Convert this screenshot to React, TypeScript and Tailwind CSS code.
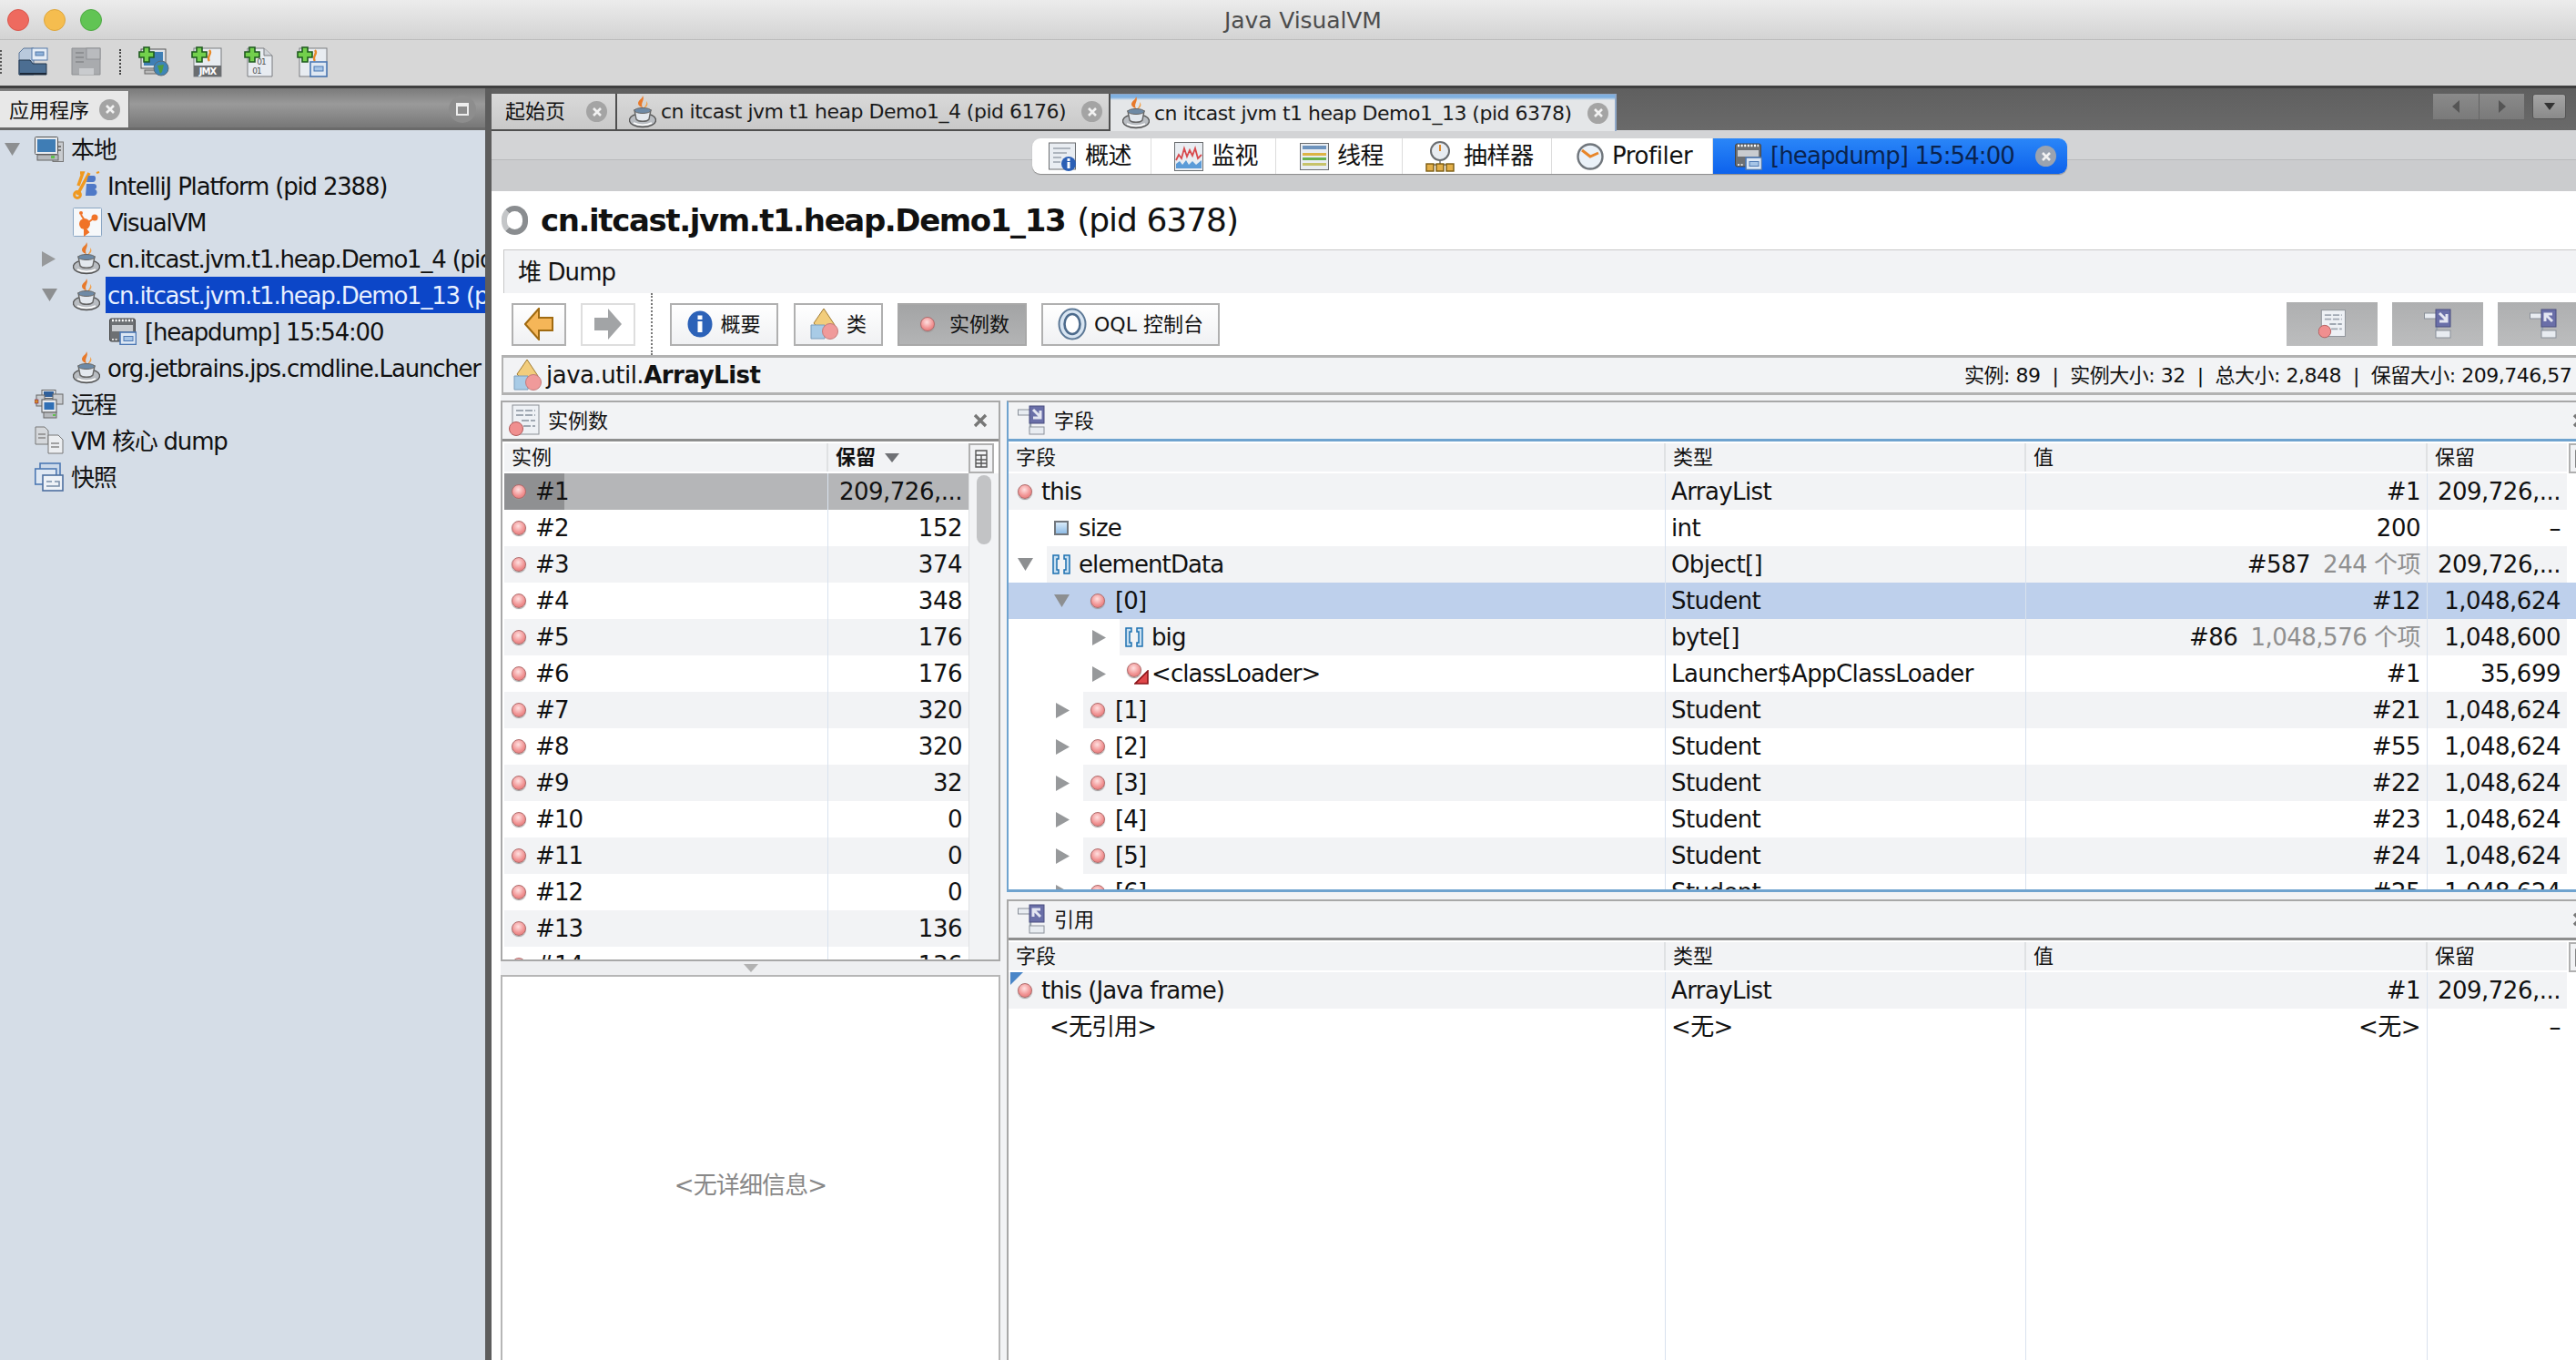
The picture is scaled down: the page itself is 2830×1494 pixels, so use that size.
import React from "react";

type IP = { className?: string };

const Ball = () => (
  <span className="block w-[16px] h-[16px] rounded-full shrink-0 border border-[#b06a6a] bg-[radial-gradient(circle_at_45%_35%,#ffe0e0,#f08f8f_60%,#d97070)] shadow-[0_1px_1px_#999]" />
);

const Arrow = ({ open }: { open?: boolean }) =>
  open ? (
    <svg width="17" height="14" viewBox="0 0 17 14" className="shrink-0"><path d="M0 0H17L8.5 14Z" fill="#8d8f91" /></svg>
  ) : (
    <svg width="15" height="17" viewBox="0 0 15 17" className="shrink-0"><path d="M0 0V17L15 8.5Z" fill="#97999b" /></svg>
  );

const CloseDot = ({ tone = "bg-[#a4a4a4]" }: { tone?: string }) => (
  <span className={`flex items-center justify-center w-[23px] h-[23px] rounded-full shrink-0 ${tone}`}>
    <svg width="12" height="12" viewBox="0 0 12 12"><path d="M2 2L10 10M10 2L2 10" stroke="#f2f2f2" strokeWidth="2.6" /></svg>
  </span>
);

const Cup = () => (
  <svg width="30" height="36" viewBox="0 0 30 36" className="shrink-0">
    <path d="M15 0C18 5 12 8 15 13C10 12 9 8 11 6C12 4 15 3 15 0Z" fill="#e8792a" />
    <path d="M19 6C20 10 17 12 16 14C20 13 22 9 19 6Z" fill="#f2a04a" />
    <ellipse cx="15" cy="27" rx="14.5" ry="7.5" fill="#b9bdc2" stroke="#555" strokeWidth="1.4" />
    <path d="M6 16H24L22 26C20 29 10 29 8 26Z" fill="#e3e8ee" stroke="#666" strokeWidth="1.4" />
    <ellipse cx="15" cy="16.5" rx="9" ry="3" fill="#6e8aa6" stroke="#666" />
    <path d="M5 30C10 33 20 33 25 30" stroke="#fff" strokeWidth="1.6" fill="none" />
  </svg>
);

const Monitor = () => (
  <svg width="32" height="28" viewBox="0 0 32 28" className="shrink-0">
    <rect x="20" y="6" width="11.5" height="21.5" fill="#c9ccd0" stroke="#777" />
    <rect x="23" y="10" width="6" height="2" fill="#777" />
    <rect x="23" y="14" width="6" height="2" fill="#777" />
    <rect x="0.5" y="0.5" width="25" height="19" rx="1" fill="#e8ebef" stroke="#555" />
    <rect x="3" y="3" width="20" height="14" fill="#3f7db5" />
    <rect x="3" y="20" width="23" height="6" fill="#b6b9bd" stroke="#666" />
    <rect x="18" y="21" width="4" height="3" fill="#5fc24e" />
  </svg>
);

const Ij = () => (
  <svg width="30" height="32" viewBox="0 0 30 32" className="shrink-0">
    <path d="M5 26L18 2M8 2H11L6 16" stroke="#f0991f" strokeWidth="3.5" fill="none" />
    <circle cx="5" cy="26" r="3.4" fill="none" stroke="#f0991f" strokeWidth="3" />
    <path d="M15 14H23C27 14 27 19 24 20C28 21 27 27 23 27H14Z M17 5H23C26 5 26 12 22 12H15Z" fill="#4f79c7" />
    <path d="M26 2L29 1" stroke="#f0991f" strokeWidth="2" />
  </svg>
);

const Vvm = () => (
  <svg width="32" height="32" viewBox="0 0 32 32" className="shrink-0">
    <rect x="0.5" y="0.5" width="31" height="31" rx="1" fill="#f6f8fa" stroke="#8aa6c4" />
    <circle cx="13" cy="18" r="6" fill="#f07328" />
    <circle cx="24" cy="11" r="3.5" fill="#f07328" />
    <circle cx="9" cy="6" r="2" fill="#f07328" />
    <path d="M13 22L13 30L17 27ZM9 8L13 14M24 11L16 17" stroke="#f07328" strokeWidth="2" fill="#f07328" />
  </svg>
);

const Dump = () => (
  <svg width="30" height="30" viewBox="0 0 30 30" className="shrink-0">
    <rect x="0.5" y="1" width="28" height="25" rx="2" fill="#6d7073" stroke="#444" />
    <path d="M3 3H26" stroke="#fff" strokeWidth="2.4" strokeDasharray="2 1.6" />
    <rect x="3" y="8" width="23" height="7" fill="#c9ccd0" />
    <rect x="12" y="16" width="17.5" height="13.5" fill="#dce7f4" stroke="#4d78b3" strokeWidth="1.6" />
    <rect x="16" y="20.5" width="10" height="5" fill="#a6c4e6" stroke="#4d78b3" />
    <path d="M3 24H10" stroke="#ddd" strokeWidth="2" strokeDasharray="2 1.6" />
  </svg>
);

const Remote = () => (
  <svg width="32" height="32" viewBox="0 0 32 32" className="shrink-0">
    <rect x="8" y="0.5" width="15" height="9" fill="#e8ebef" stroke="#666" />
    <rect x="10" y="2" width="11" height="6" fill="#2f5f9a" />
    <rect x="20" y="5" width="11" height="11" fill="#c9ccd0" stroke="#666" />
    <rect x="2" y="6" width="9" height="12" fill="#c9ccd0" stroke="#666" />
    <rect x="0" y="11" width="4" height="4" fill="#d18a2a" stroke="#704" strokeWidth="0.5" />
    <rect x="8" y="11" width="16" height="14" fill="#e8ebef" stroke="#555" />
    <rect x="10.5" y="14" width="11" height="8" fill="#2f6fb5" />
    <rect x="10" y="25" width="14" height="6" fill="#b6b9bd" stroke="#666" />
    <rect x="20" y="27" width="3" height="2" fill="#5fc24e" />
  </svg>
);

const CoreDump = () => (
  <svg width="32" height="32" viewBox="0 0 32 32" className="shrink-0">
    <path d="M1 1H11L15 5V20H1Z" fill="#d4d7db" stroke="#777" />
    <path d="M15 10H26L31 15V30H15Z" fill="#eceef1" stroke="#777" />
    <path d="M18 19H27M18 23H27M4 9H12M4 13H12" stroke="#888" strokeWidth="1.6" />
  </svg>
);

const Snapshot = () => (
  <svg width="32" height="32" viewBox="0 0 32 32" className="shrink-0">
    <rect x="6" y="1" width="22" height="16" fill="#cbd9ea" stroke="#4d78b3" strokeWidth="1.6" />
    <rect x="0.8" y="7" width="23" height="17" fill="#dfe8f3" stroke="#4d78b3" strokeWidth="1.6" />
    <rect x="9" y="14" width="22" height="17" fill="#eef2f7" stroke="#4d6f9f" strokeWidth="1.6" />
    <path d="M13 21H19M22 21H27V26H13" stroke="#7a8ea8" strokeWidth="1.6" fill="none" />
  </svg>
);

const Plus = () => (
  <path d="M6 1H12V6H17V12H12V17H6V12H1V6H6Z" fill="#73d04c" stroke="#1e5a1e" strokeWidth="1.6" />
);

const OpenIcon = () => (
  <svg width="33" height="32" viewBox="0 0 33 32" className="shrink-0">
    <path d="M1 6L6 1H17V30H1Z" fill="#b9c9dc" stroke="#5a7597" />
    <rect x="15" y="1" width="17" height="13" fill="#e6eef7" stroke="#5578a8" />
    <rect x="19" y="5" width="9" height="4" fill="#8fb3db" stroke="#5578a8" />
    <path d="M1 14H13L16 18H31V30H1Z" fill="#4c6e92" stroke="#23364d" />
    <path d="M2 29H31" stroke="#1b2838" strokeWidth="2" />
  </svg>
);

const SaveIcon = () => (
  <svg width="33" height="32" viewBox="0 0 33 32" className="shrink-0">
    <path d="M1 1H32V30H1Z" fill="#a9abae" stroke="#8e9093" />
    <rect x="17" y="1" width="15" height="12" fill="#b9bbbe" stroke="#909295" />
    <path d="M5 6H14M5 11H14M5 16H14" stroke="#8e9093" strokeWidth="2" />
    <rect x="9" y="23" width="16" height="7" fill="#c9cbce" />
  </svg>
);

const AddRemote = () => (
  <svg width="34" height="34" viewBox="0 0 34 34" className="shrink-0">
    <rect x="3" y="3" width="27" height="21" fill="#dfe3e8" stroke="#555" />
    <rect x="6" y="6" width="21" height="15" fill="#3f7fb5" />
    <rect x="7" y="26" width="16" height="4" fill="#bbb" stroke="#666" />
    <circle cx="25" cy="24" r="8" fill="#3d85b5" stroke="#5a6a75" />
    <path d="M21 21L28 20L26 28L24 30Z" fill="#4f9b3e" />
    <Plus />
  </svg>
);

const AddJmx = () => (
  <svg width="34" height="34" viewBox="0 0 34 34" className="shrink-0">
    <rect x="3" y="2" width="30" height="31" fill="#e8ecf1" stroke="#7a7d80" />
    <path d="M20 4C24 8 16 11 20 16" stroke="#e88a2a" strokeWidth="2.4" fill="none" />
    <rect x="3" y="21" width="30" height="12" fill="#6a6d70" />
    <text x="18" y="31" fontSize="10" fontWeight="700" textAnchor="middle" fill="#fff" fontFamily="DejaVu Sans">JMX</text>
    <Plus />
  </svg>
);

const AddCore = () => (
  <svg width="32" height="34" viewBox="0 0 32 34" className="shrink-0">
    <path d="M4 2H22L31 10V33H4Z" fill="#e8ecf1" stroke="#7a7d80" />
    <path d="M22 2V10H31" fill="#cfd3d8" stroke="#7a7d80" />
    <text x="19" y="20" fontSize="9" textAnchor="middle" fill="#555" fontFamily="DejaVu Sans">01</text>
    <text x="14" y="30" fontSize="9" textAnchor="middle" fill="#555" fontFamily="DejaVu Sans">01</text>
    <Plus />
  </svg>
);

const AddSnap = () => (
  <svg width="34" height="34" viewBox="0 0 34 34" className="shrink-0">
    <rect x="3" y="2" width="30" height="31" fill="#e8ecf1" stroke="#7a7d80" />
    <path d="M20 4C24 8 16 11 20 16" stroke="#e88a2a" strokeWidth="2.4" fill="none" />
    <rect x="15" y="17" width="18" height="16" fill="#dfe8f3" stroke="#4d78b3" strokeWidth="1.6" />
    <rect x="19" y="22" width="10" height="5" fill="#a6c4e6" stroke="#4d78b3" />
    <Plus />
  </svg>
);

const OverviewIcon = () => (
  <svg width="32" height="34" viewBox="0 0 32 34" className="shrink-0">
    <rect x="0.5" y="2" width="29" height="29" fill="#e9edf2" stroke="#6a6d70" />
    <path d="M5 8H24M5 13H20M5 18H14M5 23H13" stroke="#9aa2ad" strokeWidth="1.6" />
    <circle cx="22" cy="25" r="8" fill="#2b5fb5" />
    <rect x="20.5" y="23" width="3" height="7" fill="#fff" />
    <rect x="20.5" y="19" width="3" height="3" fill="#fff" />
  </svg>
);

const MonitorChart = () => (
  <svg width="32" height="32" viewBox="0 0 32 32" className="shrink-0">
    <rect x="0.5" y="0.5" width="31" height="31" fill="#e9edf2" stroke="#6a6d70" />
    <path d="M2 20L5 14L8 18L11 7L14 16L17 9L20 15L23 7L26 18L30 14" stroke="#d8494d" strokeWidth="1.8" fill="none" />
    <path d="M2 29V24L6 21L9 25L13 20L16 25L20 21L24 25L30 20V29Z" fill="#5b9bd8" />
  </svg>
);

const ThreadIcon = () => (
  <svg width="32" height="30" viewBox="0 0 32 30" className="shrink-0">
    <rect x="0.5" y="0.5" width="31" height="29" fill="#e9edf2" stroke="#6a6d70" />
    <rect x="3" y="3" width="26" height="4" fill="#6d93bd" />
    <rect x="3" y="11" width="26" height="3" fill="#dcb445" />
    <rect x="3" y="16" width="26" height="3" fill="#66b14e" />
    <rect x="3" y="22" width="26" height="3" fill="#c7c36a" />
  </svg>
);

const SamplerIcon = () => (
  <svg width="32" height="34" viewBox="0 0 32 34" className="shrink-0">
    <circle cx="16" cy="11" r="10" fill="#e8ecf1" stroke="#6a6d70" strokeWidth="2" />
    <path d="M16 4V11" stroke="#e08a2a" strokeWidth="2" />
    <path d="M16 22V26M6 26H26" stroke="#777" strokeWidth="1.6" fill="none" />
    <rect x="1" y="25" width="8" height="8" fill="#e4b04a" stroke="#7a5a10" strokeWidth="1.4" />
    <rect x="12" y="25" width="8" height="8" fill="#e4b04a" stroke="#7a5a10" strokeWidth="1.4" />
    <rect x="23" y="25" width="8" height="8" fill="#e4b04a" stroke="#7a5a10" strokeWidth="1.4" />
  </svg>
);

const ClockIcon = () => (
  <svg width="30" height="32" viewBox="0 0 30 32" className="shrink-0">
    <circle cx="15" cy="16" r="13.5" fill="#eaf1f8" stroke="#70767c" strokeWidth="2.4" />
    <path d="M6 9L15 16L24 12" stroke="#e8862a" strokeWidth="3" fill="none" />
  </svg>
);

const ClassIcon = () => (
  <svg width="32" height="36" viewBox="0 0 32 36" className="shrink-0">
    <path d="M15 1L27 19L15 30L4 17Z" fill="#f2cd7c" stroke="#a07a30" />
    <path d="M1 19H16V34H1Z" fill="#a8cbe6" stroke="#7a9dbb" />
    <circle cx="22" cy="26" r="8.5" fill="#f09a9a" stroke="#c47a7a" />
  </svg>
);

const InfoIcon = () => (
  <svg width="28" height="30" viewBox="0 0 28 30" className="shrink-0">
    <ellipse cx="14" cy="15" rx="13.5" ry="14.5" fill="#2c62b8" />
    <rect x="11.5" y="12" width="5" height="12" fill="#fff" />
    <rect x="11.5" y="5.5" width="5" height="4.5" fill="#fff" />
  </svg>
);

const OqlIcon = () => (
  <svg width="32" height="36" viewBox="0 0 32 36" className="shrink-0">
    <ellipse cx="16" cy="18" rx="14.5" ry="16.5" fill="#d8e5f2" stroke="#5c7896" strokeWidth="2" />
    <ellipse cx="16" cy="18" rx="8.5" ry="11" fill="#fff" stroke="#4d6b8c" strokeWidth="2.6" />
  </svg>
);

const InstTable = () => (
  <svg width="34" height="36" viewBox="0 0 34 36" className="shrink-0">
    <rect x="4" y="1" width="29" height="32" fill="#eef1f5" stroke="#8a8f95" />
    <path d="M8 7H29M8 12H29M14 18H29M16 24H29" stroke="#a0a8b2" strokeWidth="2" strokeDasharray="8 2" />
    <circle cx="8" cy="27" r="7.5" fill="#f08f8f" stroke="#b05a5a" />
  </svg>
);

const FieldTreeIcon = ({ out }: { out?: boolean }) => (
  <svg width="30" height="34" viewBox="0 0 30 34" className="shrink-0">
    <path d="M6 9H14V28H18" stroke="#9aa5b0" strokeWidth="2.4" fill="none" />
    <rect x="0.5" y="5" width="14" height="6" fill="#e8ecf1" stroke="#8a9099" />
    <rect x="13" y="24" width="16" height="8" fill="#e8ecf1" stroke="#8a9099" />
    <rect x="13" y="1" width="16" height="19" fill="#6a6fa8" stroke="#4a4f80" />
    <path d={out ? "M17 5L25 13M25 6V14H17" : "M25 14L17 6M17 14V6H25"} stroke="#e4e6f2" strokeWidth="3" fill="none" />
  </svg>
);

const SizeIcon = () => (
  <span className="block w-[16px] h-[16px] border-2 border-[#71767c] bg-[linear-gradient(#d9ebfa,#8fbce6)] shrink-0" />
);

const ArrIcon = () => (
  <svg width="22" height="24" viewBox="0 0 22 24" className="shrink-0">
    <path d="M8 2H2V22H8V18H6V6H8ZM14 2H20V22H14V18H16V6H14Z" fill="#c9e0f2" stroke="#1c70b0" strokeWidth="1.5" />
  </svg>
);

const LoaderIcon = () => (
  <span className="relative block w-[24px] h-[24px] shrink-0">
    <span className="absolute left-0 top-0"><Ball /></span>
    <svg width="16" height="16" viewBox="0 0 16 16" className="absolute right-0 bottom-0">
      <path d="M15 1V15H1Z" fill="#e0474a" stroke="#8a1418" strokeWidth="1.6" />
    </svg>
  </span>
);

const Tri = ({ className }: IP) => (
  <svg width="16" height="12" viewBox="0 0 16 12" className={className}><path d="M0 1H16L8 11Z" fill="#6f7175" /></svg>
);

const treeRows: { lvl: number; arrow?: "o" | "c"; icon: React.ReactNode; text: string; sel?: boolean }[] = [
  { lvl: 0, arrow: "o", icon: <Monitor />, text: "本地" },
  { lvl: 1, icon: <Ij />, text: "IntelliJ Platform (pid 2388)" },
  { lvl: 1, icon: <Vvm />, text: "VisualVM" },
  { lvl: 1, arrow: "c", icon: <Cup />, text: "cn.itcast.jvm.t1.heap.Demo1_4 (pid 6176)" },
  { lvl: 1, arrow: "o", icon: <Cup />, text: "cn.itcast.jvm.t1.heap.Demo1_13 (pid 6378)", sel: true },
  { lvl: 2, icon: <Dump />, text: "[heapdump] 15:54:00" },
  { lvl: 1, icon: <Cup />, text: "org.jetbrains.jps.cmdline.Launcher (" },
  { lvl: 0, icon: <Remote />, text: "远程" },
  { lvl: 0, icon: <CoreDump />, text: "VM 核心 dump" },
  { lvl: 0, icon: <Snapshot />, text: "快照" },
];

const lvlWidth = ["w-[78px]", "w-[118px]", "w-[159px]"];
const lvlArrow = ["pl-[5px]", "pl-[46px]", "pl-[46px]"];
const lvlIcon = ["left-[38px]", "left-[80px]", "left-[120px]"];

const Tree = () => (
  <div className="flex-1 bg-[#d5dde7] pt-[1px] overflow-hidden tracking-[-1.2px]">
    {treeRows.map((r, i) => (
      <div key={i} className="relative flex items-center h-[40px] whitespace-nowrap">
        <div className={`${lvlWidth[r.lvl]} ${lvlArrow[r.lvl]} shrink-0 flex items-center`}>
          {r.arrow && <Arrow open={r.arrow === "o"} />}
        </div>
        <div className={`absolute ${lvlIcon[r.lvl]} top-0 h-[40px] flex items-center`}>{r.icon}</div>
        <div className={`flex-1 h-[40px] leading-[43px] overflow-hidden -ml-[2px] pl-[2px] ${r.sel ? "bg-[#0c46c8] text-[#e8f0ff]" : "text-[#111]"}`}>{r.text}</div>
      </div>
    ))}
  </div>
);

const Tab = ({ w, icon, text, active }: { w: string; icon?: React.ReactNode; text: string; active?: boolean }) => (
  <div className={`${w} h-[41px] shrink-0 flex items-center gap-[5px] pl-[13px] whitespace-nowrap text-[22px] border-r-2 border-[#4f4f4f] ${active ? "bg-[linear-gradient(#7fb0e0_0,#7fb0e0_3px,#e4e6e8_6px)] border-t border-[#8fa8c8]" : "bg-[linear-gradient(#d9d9d9,#c9c9c9)] border-b-2"}`}>
    {icon}
    <span className="text-[#1a1a1a] tracking-[-0.5px]">{text}</span>
    <span className="ml-auto mr-[7px]"><CloseDot /></span>
  </div>
);

const SubTab = ({ w, pl, gap, icon, text }: { w: string; pl: string; gap: string; icon: React.ReactNode; text: string }) => (
  <div className={`${w} ${pl} ${gap} shrink-0 h-full flex items-center border-r border-[#dcdcdc] text-[#111] whitespace-nowrap tracking-[-0.4px]`}>
    {icon}
    <span>{text}</span>
  </div>
);

const Btn = ({ w, children, sel, mute }: { w: string; children: React.ReactNode; sel?: boolean; mute?: boolean }) => (
  <div className={`${w} h-[47px] shrink-0 flex items-center justify-center gap-[8px] text-[22px] tracking-normal border-2 text-[#111] whitespace-nowrap ${sel ? "bg-[linear-gradient(#a3a4a5,#b3b4b5)] border-[#a8a8a8] pl-[6px]" : mute ? "bg-white border-[#dedede]" : "bg-[linear-gradient(#fff,#f0f1f3)] border-[#b0b0b0]"}`}>
    {children}
  </div>
);

const GrayBtn = ({ children }: { children: React.ReactNode }) => (
  <div className="w-[100px] h-[48px] shrink-0 flex items-center justify-center bg-[linear-gradient(#aeafb0,#bcbdbe)]">{children}</div>
);

const instRows = [
  ["#1", "209,726,..."], ["#2", "152"], ["#3", "374"], ["#4", "348"], ["#5", "176"], ["#6", "176"], ["#7", "320"],
  ["#8", "320"], ["#9", "32"], ["#10", "0"], ["#11", "0"], ["#12", "0"], ["#13", "136"], ["#14", "136"],
];

const HeadCell = ({ w, children, last }: { w: string; children: React.ReactNode; last?: boolean }) => (
  <div className={`${w} h-[31px] shrink-0 flex items-center gap-[10px] pl-[8px] text-[22px] tracking-normal text-[#111] ${last ? "" : "border-r-2 border-[#dfe1e3]"}`}>{children}</div>
);

const Corner = () => (
  <div className="w-[28px] h-[33px] shrink-0 border-2 border-[#b0b0b0] bg-[#f2f3f5] flex items-center justify-center">
    <svg width="14" height="20" viewBox="0 0 14 20"><path d="M1 1H13V19H1ZM1 6H13M1 11H13M1 15H13M7 6V19" stroke="#555" strokeWidth="1.4" fill="none" /></svg>
  </div>
);

const PanelHead = ({ icon, title, close, blue, pad }: { icon: React.ReactNode; title: string; close: string; blue?: boolean; pad: string }) => (
  <div className={`h-[43px] shrink-0 flex items-center bg-[#f2f3f5] border-b-[3px] whitespace-nowrap ${blue ? "border-[#6fa3cf]" : "border-[#8e8e8e]"}`}>
    <div className={`w-[50px] ${pad} flex items-center shrink-0`}>{icon}</div>
    <span className="text-[22px] tracking-normal text-[#111]">{title}</span>
    <svg width="16" height="16" viewBox="0 0 16 16" className={`${close} shrink-0`}><path d="M2 2L14 14M14 2L2 14" stroke="#777" strokeWidth="3.4" /></svg>
  </div>
);

type F = {
  d: number;
  arrow?: "o" | "c";
  icon?: React.ReactNode;
  name: string;
  type: string;
  val: string;
  muted?: string;
  ret: string;
  sel?: boolean;
  gray?: boolean;
};

const fields: F[] = [
  { d: 0, icon: <Ball />, name: "this", type: "ArrayList", val: "#1", ret: "209,726,...", gray: true },
  { d: 1, icon: <span className="pl-[3px]"><SizeIcon /></span>, name: "size", type: "int", val: "200", ret: "–" },
  { d: 1, arrow: "o", icon: <ArrIcon />, name: "elementData", type: "Object[]", val: "#587", muted: "244 个项", ret: "209,726,...", gray: true },
  { d: 2, arrow: "o", icon: <span className="pl-[3px]"><Ball /></span>, name: "[0]", type: "Student", val: "#12", ret: "1,048,624", sel: true },
  { d: 3, arrow: "c", icon: <ArrIcon />, name: "big", type: "byte[]", val: "#86", muted: "1,048,576 个项", ret: "1,048,600", gray: true },
  { d: 3, arrow: "c", icon: <span className="pl-[3px]"><LoaderIcon /></span>, name: "<classLoader>", type: "Launcher$AppClassLoader", val: "#1", ret: "35,699" },
  { d: 2, arrow: "c", icon: <span className="pl-[3px]"><Ball /></span>, name: "[1]", type: "Student", val: "#21", ret: "1,048,624", gray: true },
  { d: 2, arrow: "c", icon: <span className="pl-[3px]"><Ball /></span>, name: "[2]", type: "Student", val: "#55", ret: "1,048,624" },
  { d: 2, arrow: "c", icon: <span className="pl-[3px]"><Ball /></span>, name: "[3]", type: "Student", val: "#22", ret: "1,048,624", gray: true },
  { d: 2, arrow: "c", icon: <span className="pl-[3px]"><Ball /></span>, name: "[4]", type: "Student", val: "#23", ret: "1,048,624" },
  { d: 2, arrow: "c", icon: <span className="pl-[3px]"><Ball /></span>, name: "[5]", type: "Student", val: "#24", ret: "1,048,624", gray: true },
  { d: 2, arrow: "c", icon: <span className="pl-[3px]"><Ball /></span>, name: "[6]", type: "Student", val: "#25", ret: "1,048,624" },
];

const gutter = ["w-0", "w-[42px] pr-[15px]", "w-[82px] pr-[15px]", "w-[122px] pr-[15px]"];
const iconBox = ["w-[36px] pl-[10px]", "w-[35px] pl-[5px]", "w-[35px] pl-[5px]", "w-[35px] pl-[5px]"];

const FieldRow = ({ f }: { f: F }) => {
  const bg = f.sel ? "bg-[#bed0ec]" : f.gray ? "bg-[#f2f3f5]" : "bg-white";
  return (
    <div className={`flex h-[40px] shrink-0 whitespace-nowrap text-[#111] ${f.sel ? "bg-[#bed0ec]" : ""}`}>
      <div className="w-[722px] shrink-0 flex border-r border-[#d9e2ee]">
        <div className={`${gutter[f.d]} shrink-0 flex items-center justify-end`}>
          {f.arrow && <Arrow open={f.arrow === "o"} />}
        </div>
        <div className={`flex-1 flex items-center ${bg}`}>
          <div className={`${iconBox[f.d]} shrink-0 flex items-center`}>{f.icon}</div>
          <span className={f.icon ? "" : "ml-[9px]"}>{f.name}</span>
        </div>
      </div>
      <div className={`w-[396px] shrink-0 pl-[6px] leading-[40px] tracking-[-0.6px] border-r border-[#d9e2ee] ${bg}`}>{f.type}</div>
      <div className={`w-[441px] shrink-0 pr-[7px] flex items-center justify-end gap-[14px] tracking-[-0.5px] border-r border-[#d9e2ee] ${bg}`}>
        <span>{f.val}</span>
        {f.muted && <span className="text-[#8f8f8f]">{f.muted}</span>}
      </div>
      <div className={`w-[153px] shrink-0 pr-[7px] text-right leading-[40px] tracking-[-0.5px] ${bg}`}>{f.ret}</div>
    </div>
  );
};

const FieldHead = () => (
  <div className="flex h-[35px] pt-[2px] shrink-0 bg-white">
    <div className="flex bg-[#f2f3f5] h-[31px]">
      <HeadCell w="w-[722px]">字段</HeadCell>
      <HeadCell w="w-[396px]">类型</HeadCell>
      <HeadCell w="w-[441px]">值</HeadCell>
      <HeadCell w="w-[153px]" last>保留</HeadCell>
    </div>
    <div className="ml-[2px]"><Corner /></div>
  </div>
);

const Filler = () => (
  <div className="flex flex-1">
    <div className="w-[722px] shrink-0 border-r border-[#d9e2ee]" />
    <div className="w-[396px] shrink-0 border-r border-[#d9e2ee]" />
    <div className="w-[441px] shrink-0 border-r border-[#d9e2ee]" />
  </div>
);

export default function App() {
  return (
    <div className="w-[2830px] h-[1494px] overflow-hidden flex flex-col bg-white text-[26px] font-['DejaVu_Sans','Noto_Sans_CJK_SC',sans-serif] tracking-[-0.9px]">
      {/* title bar */}
      <div className="h-[44px] shrink-0 flex items-center pl-[8px] gap-[16px] bg-[linear-gradient(#ececec,#d3d3d3)] border-b border-[#bcbcbc]">
        <span className="w-[24px] h-[24px] rounded-full bg-[#ee6a5f] border border-[#d9584e]" />
        <span className="w-[24px] h-[24px] rounded-full bg-[#f5bd4f] border border-[#dda63c]" />
        <span className="w-[24px] h-[24px] rounded-full bg-[#61c454] border border-[#4fa944]" />
        <span className="ml-[1217px] mt-[2px] text-[#4d4d4d] text-[25px] tracking-[-0.1px]">Java VisualVM</span>
      </div>
      {/* toolbar */}
      <div className="h-[50px] shrink-0 flex items-center pb-[2px] bg-[#d7d7d7]">
        <span className="h-[26px] border-l-[2px] border-dotted border-[#555]" />
        <span className="ml-[18px]"><OpenIcon /></span>
        <span className="ml-[25px]"><SaveIcon /></span>
        <span className="ml-[20px] h-[28px] border-l-[2px] border-dotted border-[#444]" />
        <span className="ml-[19px]"><AddRemote /></span>
        <span className="ml-[24px]"><AddJmx /></span>
        <span className="ml-[24px]"><AddCore /></span>
        <span className="ml-[26px]"><AddSnap /></span>
      </div>
      <div className="h-[3px] shrink-0 bg-[#3f3f3f]" />
      {/* main */}
      <div className="flex-1 flex min-h-0">
        {/* left */}
        <div className="w-[533px] shrink-0 flex flex-col">
          <div className="h-[46px] shrink-0 flex items-end bg-[linear-gradient(#7a7a7a,#9a9a9a_40%,#777)] border-b-[3px] border-[#6a6a6a] relative">
            <div className="w-[142px] h-[40px] flex items-center pl-[10px] bg-[#e8e8e8] border-r border-[#666] text-[22px] text-[#111] whitespace-nowrap gap-[11px] tracking-normal">
              <span className="mt-[2px]">应用程序</span>
              <CloseDot />
            </div>
            <div className="absolute right-[10px] top-[8px] w-[30px] h-[30px] rounded-full bg-[#8d8d8d] flex items-center justify-center">
              <span className="block w-[14px] h-[14px] border-2 border-t-[4px] border-[#eee]" />
            </div>
          </div>
          <Tree />
        </div>
        <div className="w-[7px] shrink-0 bg-[#5d5d5d]" />
        {/* right */}
        <div className="flex-1 min-w-0 flex flex-col overflow-hidden">
          {/* doc tabs */}
          <div className="h-[46px] shrink-0 pt-[6px] bg-[linear-gradient(#5f5f5f,#6a6a6a)] flex items-start relative">
            <div className="w-[138px] h-[41px] shrink-0 flex items-center pl-[15px] text-[22px] text-[#111] bg-[linear-gradient(#d9d9d9,#c9c9c9)] border-r-2 border-b-2 border-[#4f4f4f] tracking-normal">
              <span>起始页</span>
              <span className="ml-auto mr-[9px]"><CloseDot /></span>
            </div>
            <Tab w="w-[542px]" icon={<Cup />} text="cn itcast jvm t1 heap Demo1_4 (pid 6176)" />
            <Tab w="w-[556px]" icon={<Cup />} text="cn itcast jvm t1 heap Demo1_13 (pid 6378)" active />
            <div className="absolute left-[2133px] top-[6px] flex h-[28px] gap-[1px]">
              <div className="w-[50px] bg-[linear-gradient(#8a8a8a,#7a7a7a)] flex items-center justify-center"><svg width="8" height="14" viewBox="0 0 8 14"><path d="M8 0V14L0 7Z" fill="#555" /></svg></div>
              <div className="w-[49px] bg-[linear-gradient(#8a8a8a,#7a7a7a)] flex items-center justify-center"><svg width="8" height="14" viewBox="0 0 8 14"><path d="M0 0V14L8 7Z" fill="#555" /></svg></div>
              <div className="ml-[8px] w-[37px] rounded-[3px] bg-[linear-gradient(#a5a5a5,#8a8a8a)] border border-[#555] flex items-center justify-center"><svg width="12" height="8" viewBox="0 0 12 8"><path d="M0 0H12L6 8Z" fill="#333" /></svg></div>
            </div>
          </div>
          {/* sub tabs */}
          <div className="h-[67px] shrink-0 pt-[9px] pl-[594px] flex items-start bg-[linear-gradient(#d3d4d6_0,#d3d4d6_32px,#b9babc_32px,#b9babc_33px,#cbccce_33px)]">
            <div className="h-[39px] flex rounded-[9px] overflow-hidden shadow-[0_1px_1px_#8a8a8a] bg-white">
              <SubTab w="w-[131px]" pl="pl-[18px]" gap="gap-[8px]" icon={<OverviewIcon />} text="概述" />
              <SubTab w="w-[137px]" pl="pl-[25px]" gap="gap-[9px]" icon={<MonitorChart />} text="监视" />
              <SubTab w="w-[139px]" pl="pl-[26px]" gap="gap-[9px]" icon={<ThreadIcon />} text="线程" />
              <SubTab w="w-[164px]" pl="pl-[25px]" gap="gap-[10px]" icon={<SamplerIcon />} text="抽样器" />
              <SubTab w="w-[177px]" pl="pl-[27px]" gap="gap-[9px]" icon={<ClockIcon />} text="Profiler" />
              <div className="w-[389px] h-full flex items-center pl-[24px] gap-[9px] bg-[linear-gradient(#2a86f8,#0d62ec)] text-[#0a2450] whitespace-nowrap">
                <Dump />
                <span>[heapdump] 15:54:00</span>
                <span className="ml-auto mr-[12px]"><CloseDot tone="bg-[#9aa3b0]" /></span>
              </div>
            </div>
          </div>
          {/* title */}
          <div className="h-[64px] shrink-0 flex items-center pl-[11px] gap-[14px] whitespace-nowrap text-[34px] tracking-[-1.4px] text-[#111]">
            <span className="block w-[29px] h-[32px] rounded-full border-[6px] border-[#8a8d90] border-l-[#c4c6c8]" />
            <span className="font-bold">cn.itcast.jvm.t1.heap.Demo1_13</span>
            <span className="-ml-[1px] text-[36px] tracking-[-1px]">(pid 6378)</span>
          </div>
          {/* content */}
          <div className="flex-1 min-h-0 flex flex-col pl-[10px] bg-white">
            <div className="h-[48px] shrink-0 ml-[3px] flex items-center pl-[15px] pt-[2px] bg-[#f2f3f5] border-t border-l border-[#c8c8c8] text-[#111] whitespace-nowrap">堆 Dump</div>
            <div className="h-[68px] shrink-0 flex items-center pl-[12px]">
              <Btn w="w-[60px]">
                <svg width="32" height="36" viewBox="0 0 32 36"><path d="M16 1L1 18L16 35V25H31V11H16Z" fill="#f5b658" stroke="#a06a10" strokeWidth="2" /></svg>
              </Btn>
              <span className="ml-[16px]"><Btn w="w-[60px]" mute>
                <svg width="32" height="36" viewBox="0 0 32 36"><path d="M16 1L31 18L16 35V25H1V11H16Z" fill="#a2a4a6" /></svg>
              </Btn></span>
              <span className="ml-[17px] h-[68px] border-l-2 border-dotted border-[#777]" />
              <span className="ml-[19px]"><Btn w="w-[119px]"><InfoIcon /><span>概要</span></Btn></span>
              <span className="ml-[17px]"><Btn w="w-[98px]"><ClassIcon /><span>类</span></Btn></span>
              <span className="ml-[16px]"><Btn w="w-[142px]" sel><span className="mr-[8px]"><Ball /></span><span>实例数</span></Btn></span>
              <span className="ml-[16px]"><Btn w="w-[196px]"><OqlIcon /><span>OQL 控制台</span></Btn></span>
              <span className="ml-[1172px] flex gap-[16px]">
                <GrayBtn><span className="scale-90"><InstTable /></span></GrayBtn>
                <GrayBtn><FieldTreeIcon out /></GrayBtn>
                <GrayBtn><FieldTreeIcon /></GrayBtn>
              </span>
            </div>
            <div className="h-[44px] shrink-0 ml-[1px] flex items-center pl-[11px] bg-[#f2f3f5] border-y-[3px] border-l-[2px] border-[#b2b2b2] whitespace-nowrap text-[#111]">
              <ClassIcon />
              <span className="ml-[4px] tracking-[-0.5px]">java.util.<b className="font-bold">ArrayList</b></span>
              <span className="ml-auto w-[672px] shrink-0 overflow-hidden text-[22px] tracking-[-0.5px]">实例: 89&nbsp;&nbsp;|&nbsp;&nbsp;实例大小: 32&nbsp;&nbsp;|&nbsp;&nbsp;总大小: 2,848&nbsp;&nbsp;|&nbsp;&nbsp;保留大小: 209,746,57</span>
            </div>
            <div className="flex-1 min-h-0 flex gap-[7px] pt-[6px] bg-[#f2f3f5]">
              {/* left column */}
              <div className="w-[549px] shrink-0 flex flex-col">
                <div className="h-[616px] shrink-0 flex flex-col border-2 border-[#a8a8a8] overflow-hidden bg-white">
                  <PanelHead icon={<InstTable />} title="实例数" close="ml-auto mr-[12px]" pad="pl-[7px]" />
                  <div className="flex h-[35px] pt-[2px] pl-[2px] shrink-0 bg-white">
                    <div className="flex h-[31px] bg-[#f2f3f5]">
                      <HeadCell w="w-[356px]">实例</HeadCell>
                      <HeadCell w="w-[154px]" last><span className="font-bold">保留</span><Tri /></HeadCell>
                    </div>
                    <Corner />
                  </div>
                  <div className="flex-1 min-h-0 flex pl-[2px] overflow-hidden">
                    <div className="w-[510px] shrink-0">
                      {instRows.map((r, i) => {
                        const sel = i === 0;
                        const bg = sel ? "bg-[#b5b6b8]" : i % 2 === 0 ? "bg-[#f2f3f5]" : "bg-white";
                        return (
                          <div key={r[0]} className={`flex h-[40px] text-[#111] ${bg}`}>
                            <div className="w-[356px] shrink-0 flex border-r border-[#d9e2ee]">
                              <div className={`flex items-center h-[40px] pl-[8px] gap-[10px] ${sel ? "w-[66px] bg-[#8f9092]" : ""}`}>
                                <Ball />
                                <span>{r[0]}</span>
                              </div>
                            </div>
                            <div className="w-[154px] shrink-0 pr-[7px] text-right leading-[40px] tracking-[-0.5px]">{r[1]}</div>
                          </div>
                        );
                      })}
                    </div>
                    <div className="flex-1 bg-[#f2f3f5] pt-[2px] pl-[8px] border-l border-[#dfe1e3]">
                      <div className="w-[16px] h-[76px] rounded-full bg-[#c2c3c5]" />
                    </div>
                  </div>
                </div>
                <div className="h-[15px] shrink-0 flex items-center justify-center bg-[#eeeff1]">
                  <svg width="16" height="9" viewBox="0 0 16 9"><path d="M0 0H16L8 9Z" fill="#b2b2b2" /></svg>
                </div>
                <div className="flex-1 flex items-center justify-center border-x-2 border-t-2 border-[#b6b6b6] bg-white text-[#888] text-[26px]">
                  <span className="mt-[38px]">&lt;无详细信息&gt;</span>
                </div>
              </div>
              {/* right column */}
              <div className="flex-1 min-w-0 flex flex-col">
                <div className="h-[540px] shrink-0 flex flex-col border-l-2 border-b-[3px] border-[#6fa3cf] border-t-2 border-t-[#a8a8a8] overflow-hidden bg-white">
                  <PanelHead icon={<FieldTreeIcon out />} title="字段" close="ml-[1624px]" blue pad="pl-[10px]" />
                  <FieldHead />
                  <div className="flex-1 min-h-0 overflow-hidden">
                    {fields.map((f) => <FieldRow key={f.name} f={f} />)}
                  </div>
                </div>
                <div className="h-[8px] shrink-0" />
                <div className="flex-1 min-h-0 flex flex-col border-l-2 border-t-2 border-[#a8a8a8] overflow-hidden bg-white">
                  <PanelHead icon={<FieldTreeIcon />} title="引用" close="ml-[1624px]" pad="pl-[10px]" />
                  <FieldHead />
                  <div className="relative">
                    <svg width="14" height="14" viewBox="0 0 14 14" className="absolute left-[2px] top-0 z-10"><path d="M0 0H14L0 14Z" fill="#4a86c8" /></svg>
                    <FieldRow f={{ d: 0, icon: <Ball />, name: "this (Java frame)", type: "ArrayList", val: "#1", ret: "209,726,...", gray: true }} />
                  </div>
                  <FieldRow f={{ d: 0, name: "<无引用>", type: "<无>", val: "<无>", ret: "–" }} />
                  <Filler />
                </div>
              </div>
            </div>
          </div>
        </div>
      </div>
    </div>
  );
}
